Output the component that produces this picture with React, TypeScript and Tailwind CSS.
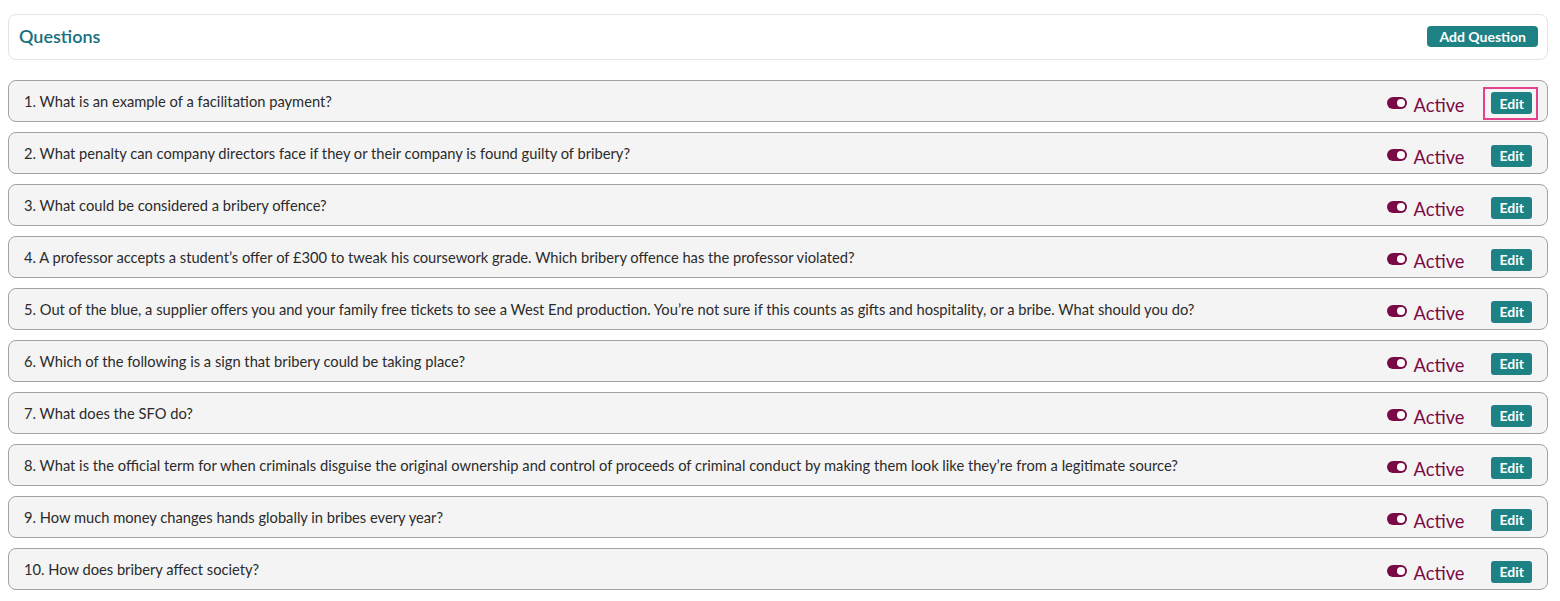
const questions = [
  "1. What is an example of a facilitation payment?",
  "2. What penalty can company directors face if they or their company is found guilty of bribery?",
  "3. What could be considered a bribery offence?",
  "4. A professor accepts a student\u2019s offer of \u00a3300 to tweak his coursework grade. Which bribery offence has the professor violated?",
  "5. Out of the blue, a supplier offers you and your family free tickets to see a West End production. You\u2019re not sure if this counts as gifts and hospitality, or a bribe. What should you do?",
  "6. Which of the following is a sign that bribery could be taking place?",
  "7. What does the SFO do?",
  "8. What is the official term for when criminals disguise the original ownership and control of proceeds of criminal conduct by making them look like they\u2019re from a legitimate source?",
  "9. How much money changes hands globally in bribes every year?",
  "10. How does bribery affect society?",
]

function Toggle() {
  return (
    <span className="flex h-[12px] w-[20px] items-center justify-end rounded-full bg-[#7a0a45] pr-[2px]">
      <span className="h-[8px] w-[8px] rounded-full bg-white" />
    </span>
  )
}

function QuestionRow({ text, focused }: { text: string; focused?: boolean }) {
  return (
    <div className="flex h-[42px] items-center justify-between rounded-[8px] border border-[#a3a3a3] bg-[#f4f4f4] pl-[15px] pr-[15px]">
      <span className="text-[14.7px] text-[#2b2b2b]">{text}</span>
      {/* controls sit a few px below the row's centre */}
      <div className="flex items-center pt-[4px]">
        <Toggle />
        <span className="ml-[7px] pt-[3px] text-[18.3px] leading-[22px] text-[#7a0a45]">Active</span>
        <div
          className={
            focused
              ? "ml-[19px] mr-[-6px] border-2 border-[#e5408d] pl-[6px] pr-[4px] pt-[2px] pb-[3px]"
              : "ml-[27px]"
          }
        >
          <button className="h-[22px] rounded-[3px] bg-[#1e8184] px-[8px] text-[14px] font-bold text-white">
            Edit
          </button>
        </div>
      </div>
    </div>
  )
}

export default function App() {
  return (
    <div className="min-h-screen bg-white pt-[14px] pl-[8px] font-['Lato',sans-serif]" style={{ width: 1560 }}>
      <div className="flex w-[1540px] flex-col gap-[10px]">
        <div className="mb-[10px] flex h-[46px] items-center justify-between rounded-[8px] border border-[#e3e3e3] bg-white pb-[2px] pl-[10px] pr-[9px]">
          <h2 className="text-[18px] font-semibold text-[#17707e]">Questions</h2>
          <button className="h-[21px] rounded-[4px] bg-[#1e8184] px-[12px] text-[14px] font-bold text-white">
            Add Question
          </button>
        </div>
        {questions.map((q, i) => (
          <QuestionRow key={q} text={q} focused={i === 0} />
        ))}
      </div>
    </div>
  )
}
